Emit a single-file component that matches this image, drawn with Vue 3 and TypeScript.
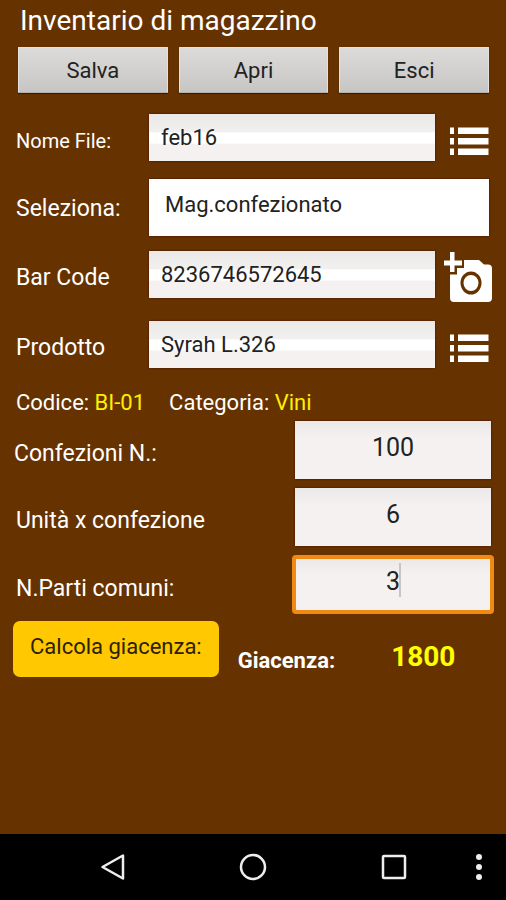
<script setup lang="ts">
import { computed, ref } from 'vue'

const fileName = ref('feb16')
const warehouses: string[] = ['Mag.confezionato', 'Mag.sfuso']
const warehouse = ref(warehouses[0])
const barCode = ref('8236746572645')
const product = ref('Syrah L.326')
const packs = ref('100')
const unitsPerPack = ref('6')
const commonParts = ref('3')

const stock = computed(() => Number(packs.value) * Number(unitsPerPack.value) * Number(commonParts.value))
const shownStock = ref(stock.value)

function calculate(): void {
  shownStock.value = stock.value
}
</script>

<template>
  <div class="screen">
    <main class="content">
      <h1 class="title">Inventario di magazzino</h1>

      <div class="toolbar">
        <button type="button" class="tool">Salva</button>
        <button type="button" class="tool">Apri</button>
        <button type="button" class="tool">Esci</button>
      </div>

      <form class="form" @submit.prevent="calculate">
        <div class="row">
          <label for="file" class="label small">Nome File:</label>
          <input id="file" v-model="fileName" type="text" class="field" />
          <button type="button" class="icon-button" aria-label="Elenco file">
            <svg class="list-icon" viewBox="0 0 40 30" aria-hidden="true">
              <path d="M1 1.500h4v6.500H1zM9 1.500h30.500v6.500H9zM1 12h4v6.500H1zM9 12h30.500v6.500H9zM1 22.500h4v6.500H1zM9 22.500h30.500v6.500H9z" />
            </svg>
          </button>
        </div>

        <div class="row wide">
          <label for="warehouse" class="label">Seleziona:</label>
          <select id="warehouse" v-model="warehouse" class="field select">
            <option v-for="name in warehouses" :key="name">{{ name }}</option>
          </select>
        </div>

        <div class="row">
          <label for="barcode" class="label">Bar Code</label>
          <input id="barcode" v-model="barCode" type="text" class="field" />
          <button type="button" class="icon-button" aria-label="Scansiona codice">
            <svg class="camera-icon" viewBox="0 0 50 52" aria-hidden="true">
              <path d="M6 0h4.500v8.500H18v5h-7.500V20H6v-6.500H0v-5h6z" />
              <path
                fill-rule="evenodd"
                d="M20 8h15l5 4.500h4q4 0 4 4V46q0 4-4 4H10q-4 0-4-4V22.500h7V16h7zM27 19.500a10.500 11.500 0 1 0 0 23a10.500 11.500 0 1 0 0-23zM27 23a7.500 8 0 1 1 0 16a7.500 8 0 1 1 0-16z"
              />
            </svg>
          </button>
        </div>

        <div class="row">
          <label for="product" class="label">Prodotto</label>
          <input id="product" v-model="product" type="text" class="field" />
          <button type="button" class="icon-button" aria-label="Elenco prodotti">
            <svg class="list-icon" viewBox="0 0 40 30" aria-hidden="true">
              <path d="M1 1.500h4v6.500H1zM9 1.500h30.500v6.500H9zM1 12h4v6.500H1zM9 12h30.500v6.500H9zM1 22.500h4v6.500H1zM9 22.500h30.500v6.500H9z" />
            </svg>
          </button>
        </div>

        <div class="info">
          <span>Codice: <b class="value">BI-01</b></span>
          <span>Categoria: <b class="value">Vini</b></span>
        </div>

        <div class="quantities">
          <div class="quantity">
            <label for="packs" class="label outdent">Confezioni N.:</label>
            <input id="packs" v-model="packs" type="text" inputmode="numeric" class="number" />
          </div>
          <div class="quantity">
            <label for="units" class="label">Unità x confezione</label>
            <input id="units" v-model="unitsPerPack" type="text" inputmode="numeric" class="number" />
          </div>
          <div class="quantity">
            <label for="parts" class="label">N.Parti comuni:</label>
            <div class="active">
              <input id="parts" v-model="commonParts" type="text" inputmode="numeric" class="number" />
              <span class="caret"></span>
            </div>
          </div>
        </div>

        <div class="result">
          <button type="submit" class="calculate">Calcola giacenza:</button>
          <span class="result-label">Giacenza:</span>
          <output class="total" for="packs units parts">{{ shownStock }}</output>
        </div>
      </form>
    </main>

    <nav class="system-bar">
      <button type="button" class="nav-button" aria-label="Indietro">
        <svg width="30" height="30" viewBox="0 0 30 30" aria-hidden="true">
          <path d="M25 3.500v23L4.500 15z" />
        </svg>
      </button>
      <button type="button" class="nav-button" aria-label="Home">
        <svg width="30" height="30" viewBox="0 0 30 30" aria-hidden="true">
          <circle cx="15" cy="15" r="12" />
        </svg>
      </button>
      <button type="button" class="nav-button" aria-label="Recenti">
        <svg width="30" height="30" viewBox="0 0 30 30" aria-hidden="true">
          <rect x="5" y="4" width="22" height="22" rx="1" />
        </svg>
      </button>
      <button type="button" class="nav-button more" aria-label="Altro">
        <svg width="8" height="30" viewBox="0 0 8 30" aria-hidden="true">
          <circle class="dot" cx="4" cy="5" r="3" />
          <circle class="dot" cx="4" cy="15" r="3" />
          <circle class="dot" cx="4" cy="25" r="3" />
        </svg>
      </button>
    </nav>
  </div>
</template>

<style>
body {
  background: #663300;
}
</style>

<style scoped>
.screen {
  display: flex;
  flex-direction: column;
  min-height: 100vh;
  background: #663300;
  color: #fff;
  font-family: Roboto, "Liberation Sans", sans-serif;
  font-size: 22px;
}

.screen * {
  box-sizing: border-box;
}

button,
input,
select {
  margin: 0;
  border: 0;
  border-radius: 0;
  outline: 0;
  font: inherit;
}

.content {
  flex: 1;
  padding: 5px 15px 16px 16px;
}

.title {
  margin: 0 4px;
  font-size: 28px;
  font-weight: 400;
  line-height: 32px;
}

.toolbar {
  display: grid;
  grid-template-columns: repeat(3, 1fr);
  gap: 11px;
  margin: 10px 2px 0;
}

.tool {
  height: 46px;
  padding: 1px 0 0;
  border: 1px solid #e4e2e0;
  border-bottom-color: #b4b0ae;
  border-radius: 1px;
  background: linear-gradient(#dcdbda, #c8c6c4);
  box-shadow: 0 1px 1px #3d1500;
  color: #222;
}

.form {
  padding-top: 21px;
}

.row {
  display: grid;
  grid-template-columns: 133px 1fr 56px;
  margin-bottom: 23px;
}

.row:first-child {
  margin-bottom: 18px;
}

.row.wide {
  grid-template-columns: 133px 1fr;
  margin-right: 2px;
  margin-bottom: 15px;
}

.label {
  align-self: center;
  padding-top: 6px;
  font-size: 23px;
  line-height: 28px;
  white-space: nowrap;
}

.wide .label {
  padding-top: 2px;
}

.label.small {
  font-size: 20px;
}

.outdent {
  margin-left: -2px;
}

.field {
  width: 100%;
  min-width: 0;
  height: 47px;
  padding: 0 12px;
  background: linear-gradient(#ebe9e8, #f2f0ef 38%, #fff 40%, #fff 62%, #f4f1f0 64%, #f4f1f0);
  box-shadow: 0 0 2px #4a0800;
  color: #222;
}

.select {
  height: 57px;
  padding: 0 16px 6px;
  appearance: none;
  background: #fff;
}

.icon-button {
  display: flex;
  align-items: center;
  height: 47px;
  padding: 6px 0 0 14px;
  background: none;
}

.list-icon {
  flex: none;
  width: 40px;
  height: 30px;
  fill: #fff;
}

.camera-icon {
  flex: none;
  width: 50px;
  height: 52px;
  margin: -6px 0 -6px -5px;
  fill: #fff;
}

.info {
  display: flex;
  gap: 24px;
  margin-top: -2px;
  line-height: 28px;
}

.value {
  color: #ffee00;
  font-weight: 400;
}

.quantities {
  display: grid;
  gap: 9px;
  margin-top: 4px;
}

.quantity {
  display: grid;
  grid-template-columns: 1fr 196px;
}

.quantity .label {
  padding-top: 8px;
}

.number {
  width: 100%;
  height: 58px;
  padding: 0 0 6px;
  background: linear-gradient(#ebe9e8, #f4f1f0 30%);
  box-shadow: 0 0 2px #4a0800;
  color: #222;
  font-size: 25px;
  text-align: center;
}

.active {
  position: relative;
  margin: 0 -3px;
  border: 4px solid #f08a12;
  border-radius: 4px;
}

.active .number {
  display: block;
  height: 51px;
  box-shadow: none;
}

.caret {
  position: absolute;
  top: 4px;
  left: calc(50% + 6px);
  width: 2px;
  height: 34px;
  background: #c8c6c5;
}

.result {
  display: flex;
  align-items: center;
  margin: 7px 0 0 -3px;
}

.calculate {
  height: 56px;
  padding: 0 17px 5px;
  border-radius: 7px;
  background: #ffc800;
  color: #2b2100;
  white-space: nowrap;
}

.result-label {
  margin-left: 19px;
  padding-top: 23px;
  line-height: 28px;
  font-weight: 700;
}

.total {
  margin-left: 56px;
  padding-top: 15px;
  color: #ffff00;
  font-size: 28px;
  font-weight: 700;
  line-height: 32px;
}

.system-bar {
  display: grid;
  grid-template-columns: 43px 1fr 1fr 1fr 43px;
  align-items: center;
  height: 66px;
  background: #000;
}

.nav-button {
  display: flex;
  justify-content: center;
  padding: 0;
  background: none;
}

.nav-button:first-child {
  grid-column: 2;
}

.more {
  grid-column: 5;
  padding-left: 12px;
  justify-content: flex-start;
}

.nav-button svg {
  fill: none;
  stroke: #eee;
  stroke-width: 2.5;
  stroke-linejoin: round;
}

.nav-button .dot {
  fill: #eee;
  stroke: none;
}
</style>
